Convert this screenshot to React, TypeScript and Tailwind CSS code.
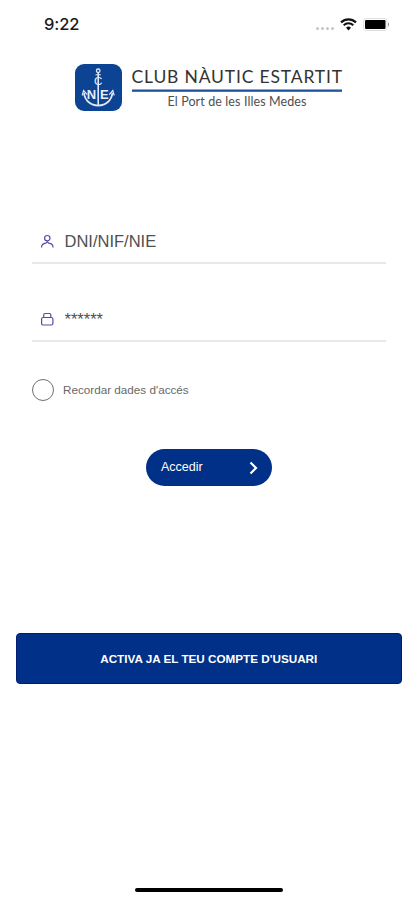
import type { ReactNode } from 'react';
import { useState } from 'react';
import clsx from 'clsx';

type FieldProps = {
  icon: ReactNode;
  type: string;
  placeholder: string;
};

function StatusBar() {
  return (
    <div className="flex h-12 items-center justify-between pr-[27px] pl-11">
      <span className="font-['Inter',sans-serif] text-[16.5px] font-medium tracking-[-0.1px] text-[#1a1a1a]">
        9:22
      </span>
      <div className="flex items-center">
        <div className="mt-2 mr-[6px] flex gap-[2px]">
          {[0, 1, 2, 3].map((dot) => (
            <i key={dot} className="h-[3px] w-[3px] rounded-full bg-[#c6c6c6]" />
          ))}
        </div>
        <svg width="17" height="13" viewBox="0 0 17 13" className="mr-[6px]" fill="none" stroke="#111">
          <path d="M1 4.4a10.8 10.8 0 0 1 15 0" strokeWidth="2.2" />
          <path d="M3.7 7.2a7 7 0 0 1 9.6 0" strokeWidth="2" />
          <path d="M8.5 12.4 6 9.8a3.6 3.6 0 0 1 5 0Z" fill="#111" stroke="none" />
        </svg>
        <svg width="27" height="13" viewBox="0 0 27 13">
          <rect x="0.5" y="0.5" width="23.5" height="12" rx="3" fill="#fff" stroke="#ddd" />
          <rect x="2" y="2" width="20.5" height="9" rx="1.2" fill="#000" />
          <path d="M25 4.2c1.4.6 1.4 4 0 4.6z" fill="#999" />
        </svg>
      </div>
    </div>
  );
}

function Logo() {
  return (
    <div className="flex pt-4 pl-[75px]">
      <svg width="47" height="47" viewBox="0 0 47 47" fill="none" stroke="#dfe8f5">
        <rect width="47" height="47" rx="9" fill="#0c4393" stroke="none" />
        <circle cx="23.2" cy="6.8" r="1.8" strokeWidth="1.3" />
        <path d="M23.2 8.6v33" strokeWidth="1.6" />
        <path d="M20.5 10.8h5.4" strokeWidth="1" />
        <path d="M9 29c.8 7.500 6.500 12.300 14.200 12.600C30.900 41.300 36.600 36.500 37.400 29" strokeWidth="1.8" />
        <path d="M7.200 31.500 8.600 26.500l3.600 4.200M39.200 31.500 37.800 26.500l-3.600 4.200" strokeWidth="1.2" />
        <g fill="#e8eef8" stroke="none" fontFamily="Liberation Sans, sans-serif">
          <text x="19" y="20.8" fontSize="11.500">C</text>
          <text x="11.800" y="35.200" fontSize="13" fontWeight="bold">N</text>
          <text x="25" y="35.200" fontSize="13" fontWeight="bold">E</text>
        </g>
      </svg>
      <svg width="212" height="47" viewBox="0 0 212 47" className="ml-[9px]" fontFamily="Lato, sans-serif">
        <text x="0.500" y="19" fontSize="17.500" textLength="210.500" fill="#333">CLUB NÀUTIC ESTARTIT</text>
        <rect x="1" y="25.500" width="210" height="2.300" fill="#1d53a0" />
        <text x="36.500" y="42" fontSize="12.500" textLength="139" fill="#505050">El Port de les Illes Medes</text>
      </svg>
    </div>
  );
}

function Field({ icon, type, placeholder }: FieldProps) {
  return (
    <label className="flex h-[45px] items-center border-b-2 border-[#e8e8e8] pt-[2px] pl-2">
      {icon}
      <input
        type={type}
        placeholder={placeholder}
        className="ml-[9.5px] min-w-0 flex-1 text-[16.5px] outline-none placeholder:text-[#505050]"
      />
    </label>
  );
}

export default function App() {
  const [remember, setRemember] = useState(false);

  return (
    <div className="flex h-[900px] w-[417px] flex-col overflow-hidden bg-white font-['Liberation_Sans',Arial,sans-serif]">
      <StatusBar />
      <Logo />

      <form className="mt-[108px] flex flex-col pr-[31px] pl-8" onSubmit={(e) => e.preventDefault()}>
        <Field
          type="text"
          placeholder="DNI/NIF/NIE"
          icon={
            <svg width="15" height="15" viewBox="0 0 15 15" fill="none" stroke="#5150a5" strokeWidth="1.2">
              <circle cx="7.3" cy="4.2" r="2.7" />
              <path d="M1.500 13.500c0-2.500 1.500-3.900 4.300-4.300l1.500-1.300 1.500 1.300c2.800.4 4.300 1.800 4.300 4.300" />
            </svg>
          }
        />
        <div className="mt-[33px]">
          <Field
            type="text"
            placeholder="******"
            icon={
              <svg width="15" height="15" viewBox="0 0 15 15" fill="none" stroke="#5150a5" strokeWidth="1.2">
                <rect x="1.600" y="5.500" width="11.300" height="7.500" rx="1.500" />
                <path d="M3.700 5.500V2.800c0-.9.600-1.300 1.300-1.300h4.500c.7 0 1.300.4 1.300 1.300v2.700" />
              </svg>
            }
          />
        </div>

        <button
          type="button"
          className="mt-[37px] flex items-center gap-[9px]"
          onClick={() => setRemember(!remember)}
        >
          <span
            className={clsx(
              'h-[22px] w-[22px] rounded-full border border-[#707070]',
              remember ? 'bg-[#003087]' : 'bg-white'
            )}
          />
          <span className="text-[11.7px] text-[#686868]">Recordar dades d'accés</span>
        </button>

        <button
          type="submit"
          className="mt-12 ml-[114px] flex h-[37px] w-[126px] items-center justify-between rounded-full bg-[#003087] pr-[14px] pl-[15px] text-[12.5px] text-white"
        >
          Accedir
          <svg width="9" height="14" viewBox="0 0 9 14" fill="none" stroke="#fff" strokeWidth="2.2">
            <path d="m1.500 1.500 5.500 5.500-5.500 5.500" />
          </svg>
        </button>
      </form>

      <button className="mr-[15.5px] ml-4 mt-[147px] flex h-[51px] items-center justify-center rounded-[4px] border border-[#001d70] bg-[#003087] text-[11.7px] font-bold text-white">
        ACTIVA JA EL TEU COMPTE D'USUARI
      </button>

      <div className="mt-auto mb-2 ml-[135px] h-1 w-[148px] rounded-full bg-black" />
    </div>
  );
}
